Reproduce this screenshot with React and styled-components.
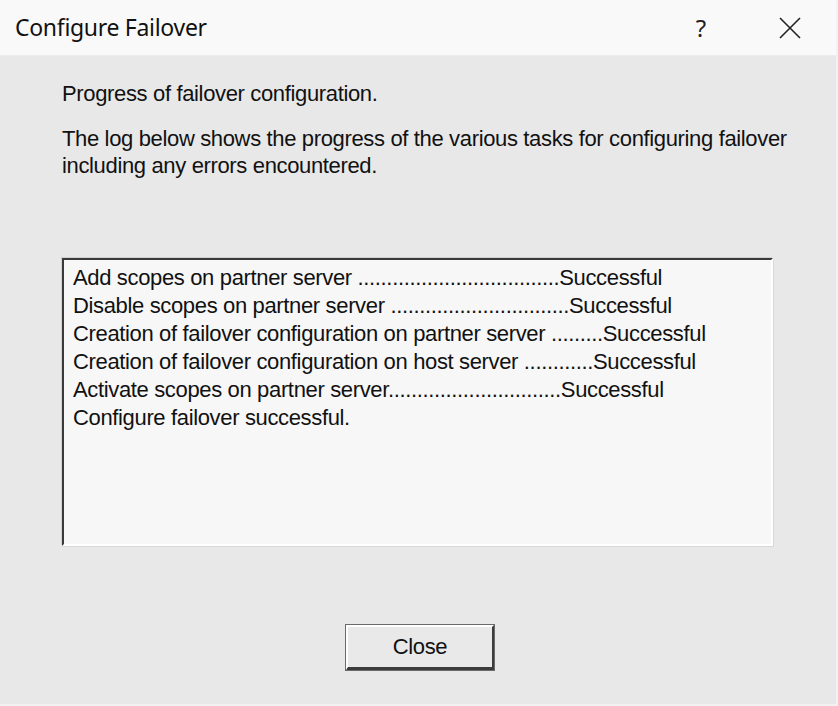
import React from "react";
import styled, { createGlobalStyle } from "styled-components";

const GlobalStyle = createGlobalStyle`
  html, body {
    margin: 0;
    padding: 0;
    background: #e8e8e8;
  }
`;

const Dialog = styled.div`
  width: 838px;
  height: 706px;
  display: flex;
  flex-direction: column;
  background: #e8e8e8;
  box-sizing: border-box;
  border-right: 2px solid #f2f2f2;
  border-bottom: 2px solid #f2f2f2;
`;

const TitleBar = styled.div`
  height: 56px;
  flex: 0 0 56px;
  background: #f9f9f9;
  display: flex;
  align-items: center;
  padding-left: 15px;
  box-sizing: border-box;
  border-bottom: 1px solid #ececec;
`;

const Title = styled.div`
  flex: 1;
  font-family: "Noto Sans", "Open Sans", sans-serif;
  font-size: 23px;
  color: #111;
  letter-spacing: -0.3px;
  margin-top: -2px;
`;

const TitleButton = styled.div`
  width: ${(p) => p.w}px;
  height: 56px;
  display: flex;
  align-items: center;
  justify-content: center;
  font-family: "Noto Sans", sans-serif;
  font-size: 24px;
  color: #222;
`;

const Body = styled.div`
  flex: 1;
  display: flex;
  flex-direction: column;
  padding: 24px 0 0 62px;
  font-family: "Liberation Sans", Arial, sans-serif;
  font-size: 22px;
  color: #111;
  letter-spacing: -0.35px;
`;

const Para = styled.p`
  margin: 0 0 ${(p) => p.gap}px 0;
  line-height: 27px;
`;

const LogBox = styled.div`
  width: 711px;
  height: 288px;
  box-sizing: border-box;
  margin-top: 79px;
  background: #f7f7f7;
  border-top: 2px solid #3a3a3a;
  border-left: 2px solid #3a3a3a;
  border-right: 2px solid #ffffff;
  border-bottom: 2px solid #ffffff;
  box-shadow: 1px 1px 0 #d8d8d8, -1px -1px 0 #d0d0d0;
  padding: 4px 0 0 9px;
`;

const LogLine = styled.div`
  line-height: 28px;
  white-space: pre;
`;

const Footer = styled.div`
  display: flex;
  justify-content: center;
  margin-top: 79px;
  margin-left: -62px;
  padding-left: 4px;
`;

const Button = styled.button`
  width: 148px;
  height: 45px;
  box-sizing: border-box;
  background: #e9e9e9;
  font-family: "Liberation Sans", Arial, sans-serif;
  font-size: 22px;
  letter-spacing: -0.35px;
  color: #111;
  border-top: 2px solid #ffffff;
  border-left: 2px solid #ffffff;
  border-right: 2px solid #3c3c3c;
  border-bottom: 3px solid #3c3c3c;
  outline: 1px solid #6a6a6a;
  padding: 0;
`;

const lines = [
  "Add scopes on partner server ...................................Successful",
  "Disable scopes on partner server ...............................Successful",
  "Creation of failover configuration on partner server .........Successful",
  "Creation of failover configuration on host server ............Successful",
  "Activate scopes on partner server..............................Successful",
  "Configure failover successful.",
];

export default function App() {
  return (
    <>
      <GlobalStyle />
      <Dialog>
        <TitleBar>
          <Title>Configure Failover</Title>
          <TitleButton w={86}>?</TitleButton>
          <TitleButton w={92}>
            <svg width="22" height="22" viewBox="0 0 22 22">
              <path d="M1 1 L21 21 M21 1 L1 21" stroke="#222" strokeWidth="1.6" fill="none" />
            </svg>
          </TitleButton>
        </TitleBar>
        <Body>
          <Para gap={18}>Progress of failover configuration.</Para>
          <Para gap={0}>
            The log below shows the progress of the various tasks for configuring failover
            <br />
            including any errors encountered.
          </Para>
          <LogBox>
            {lines.map((l, i) => (
              <LogLine key={i}>{l}</LogLine>
            ))}
          </LogBox>
          <Footer>
            <Button>Close</Button>
          </Footer>
        </Body>
      </Dialog>
    </>
  );
}
